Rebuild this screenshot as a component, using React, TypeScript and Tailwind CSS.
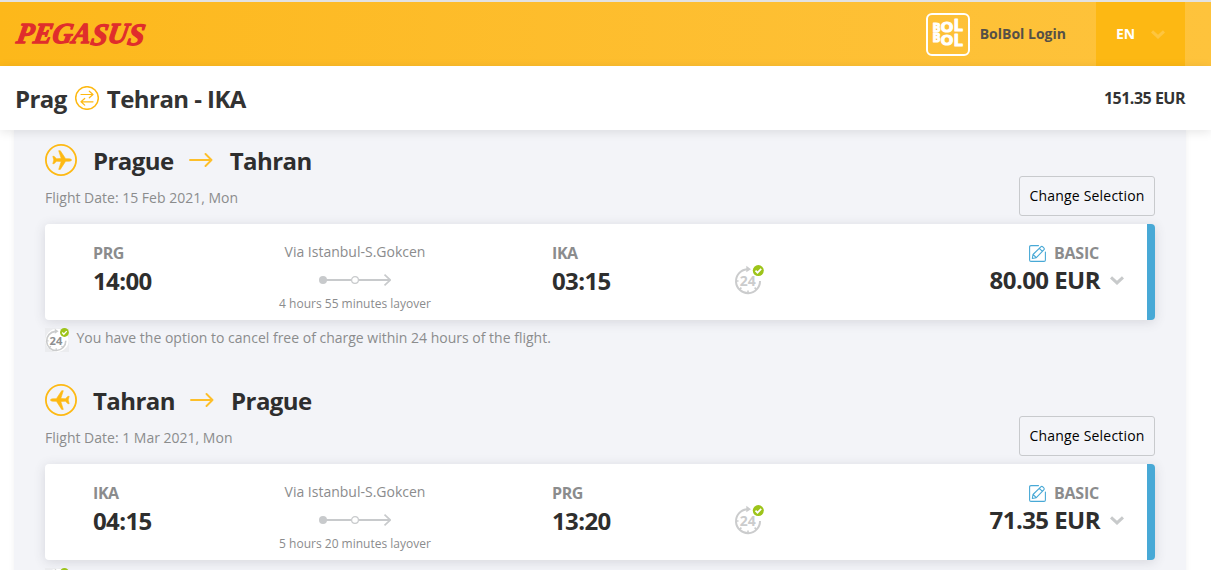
interface Flight {
  from: string;
  to: string;
  date: string;
  departureCode: string;
  departureTime: string;
  arrivalCode: string;
  arrivalTime: string;
  layover: string;
  price: string;
  inbound?: boolean;
}

const flights: Flight[] = [
  {
    from: "Prague",
    to: "Tahran",
    date: "15 Feb 2021, Mon",
    departureCode: "PRG",
    departureTime: "14:00",
    arrivalCode: "IKA",
    arrivalTime: "03:15",
    layover: "4 hours 55 minutes layover",
    price: "80.00 EUR"
  },
  {
    from: "Tahran",
    to: "Prague",
    date: "1 Mar 2021, Mon",
    departureCode: "IKA",
    departureTime: "04:15",
    arrivalCode: "PRG",
    arrivalTime: "13:20",
    layover: "5 hours 20 minutes layover",
    price: "71.35 EUR",
    inbound: true
  }
];

function PegasusLogo() {
  return (
    <svg width="132" height="28" viewBox="0 0 132 28" className="block overflow-visible">
      <text
        x="1"
        y="23"
        textLength="128"
        lengthAdjust="spacingAndGlyphs"
        transform="translate(4.5 0) skewX(-10)"
        className="fill-[#e02d2c] stroke-[#e02d2c] font-['Liberation_Serif',serif] text-[29px] font-bold italic"
        strokeWidth="1.300"
        strokeLinejoin="round"
      >
        PEGA
        <tspan dy="1.500" fontSize="31">S</tspan>
        <tspan dy="-1.500">U</tspan>
        <tspan dy="1.500" fontSize="31">S</tspan>
      </text>
    </svg>
  );
}

function BolBolLogo() {
  return (
    <svg width="44" height="43" viewBox="0 0 44 43" fill="none" className="block overflow-visible">
      <rect x="1" y="1" width="42" height="41" rx="5" stroke="#fff" strokeWidth="2" />
      <g className="fill-white stroke-white font-['Open_Sans',sans-serif] font-bold" strokeWidth="1" strokeLinejoin="round">
        <text x="6.500" y="18.500" fontSize="11.500" textLength="8" lengthAdjust="spacingAndGlyphs">B</text>
        <text x="14.500" y="18.500" fontSize="15" textLength="13" lengthAdjust="spacingAndGlyphs">O</text>
        <text x="27.500" y="18" fontSize="16" textLength="9.500" lengthAdjust="spacingAndGlyphs">L</text>
        <text x="6.500" y="29.300" fontSize="11.500" textLength="8" lengthAdjust="spacingAndGlyphs">B</text>
        <text x="14.500" y="32" fontSize="15" textLength="13" lengthAdjust="spacingAndGlyphs">O</text>
        <text x="27.500" y="33.300" fontSize="16" textLength="9.500" lengthAdjust="spacingAndGlyphs">L</text>
      </g>
    </svg>
  );
}

function SwapIcon() {
  return (
    <svg width="24" height="24" viewBox="0 0 24 24" fill="none" stroke="#fdb913" strokeLinecap="round" strokeLinejoin="round">
      <circle cx="12" cy="12" r="11.300" strokeWidth="1.500" />
      <path d="M6 8.500h12M14.300 5.200 18 8.500l-3.700 3.300M18 15.800H6M9.700 12.500 6 15.800l3.700 3.300" strokeWidth="1.200" />
    </svg>
  );
}

function PlaneIcon({ flipped }: { flipped?: boolean }) {
  return (
    <svg width="32" height="32" viewBox="0 0 32 32" fill="none" className={flipped ? "-scale-x-100" : ""}>
      <circle cx="16" cy="16" r="15.100" stroke="#fdb913" strokeWidth="1.800" />
      <path
        d="M7.800 12.300h1.300l2.400 2.500 4.700-.3-2.500-7.800h1.600l5.300 8 3.800.1c1.300.1 2.100.6 2.100 1.200s-.8 1.100-2.100 1.200l-3.800.1-5.300 8.100h-1.600l2.500-7.900-4.700-.3-2.400 2.500H7.800l1-3.700z"
        fill="#fdb913"
        stroke="#fdb913"
        strokeWidth=".6"
        strokeLinejoin="round"
      />
    </svg>
  );
}

function RouteArrow() {
  return (
    <svg width="24" height="14" viewBox="0 0 24 14" fill="none" stroke="#fdbf2a" strokeWidth="1.900" strokeLinecap="round" strokeLinejoin="round">
      <path d="M1 7h21.500M16.500 1l6 6-6 6" />
    </svg>
  );
}

function LayoverLine() {
  return (
    <svg width="72" height="12" viewBox="0 0 72 12" fill="none">
      <path d="M4 6h28M40 6h31" stroke="#c8cacc" strokeWidth="2" />
      <path d="m65.500.7 5.700 5.300-5.700 5.300" stroke="#c8cacc" strokeWidth="1.700" />
      <circle cx="4" cy="6" r="4" fill="#c8cacc" />
      <circle cx="36" cy="6" r="3.400" fill="#fff" stroke="#c8cacc" strokeWidth="1.200" />
    </svg>
  );
}

function Cancel24Icon({ size, dark }: { size: number; dark?: boolean }) {
  return (
    <svg width={size} height={size} viewBox="0 0 30 30" fill="none" className="block shrink-0">
      {dark && <circle cx="15" cy="15.500" r="14.500" fill="#fff" />}
      <path d="M13 4.200A12 12 0 1 0 26 16" stroke="#cbcccd" strokeWidth="2" />
      <path d="M12.300.8v6.500L17 4.200z" fill="#cbcccd" />
      <path d="M2 16h2.500M14 28v-2.600M5.600 24.400l1.800-1.800M22.400 24.400l-1.800-1.800" stroke="#cbcccd" strokeWidth="1.600" />
      <text
        x="5.800"
        y="20.800"
        fontSize="14"
        textLength="16"
        lengthAdjust="spacingAndGlyphs"
        className={dark ? "fill-[#8d8e8f] font-['Open_Sans',sans-serif] font-bold" : "fill-[#cbcccd] font-['Open_Sans',sans-serif] font-bold"}
      >
        24
      </text>
      <circle cx="24.300" cy="5.600" r="5.500" fill="#9dc41a" />
      <path d="m21.500 5.700 2 2 3.700-3.800" stroke="#fff" strokeWidth="1.700" />
    </svg>
  );
}

function EditIcon() {
  return (
    <svg width="17" height="17" viewBox="0 0 17 17" fill="none" stroke="#48a9d6" strokeWidth="1.100" strokeLinejoin="round" strokeLinecap="round">
      <path d="M9.500.6H2Q.6.600.6 2v13q0 1.400 1.400 1.400h13q1.400 0 1.400-1.400V7" />
      <path d="m3.300 13.500.7-4L11.800 1.900q1-1 2 0l1 1q1 1 0 2L7.300 12.700zM4 9.500l3.300 3.200M10.300 3.400l3.100 3" />
    </svg>
  );
}

function Chevron({ color }: { color: string }) {
  return (
    <svg width="14" height="9" viewBox="0 0 14 9" fill="none" stroke={color} strokeWidth="3.100">
      <path d="m1 1.300 6 5.500 6-5.500" />
    </svg>
  );
}

function FlightSection({ flight }: { flight: Flight }) {
  return (
    <section className="h-60 px-[31px]">
      <div className="flex h-[94px] justify-between">
        <div className="pt-3.5">
          <h2 className="flex h-8 items-center text-2xl font-bold tracking-[-0.55px] text-[#2e2e2e]">
            <PlaneIcon flipped={flight.inbound} />
            <span className="ml-4 mt-0.5">{flight.from}</span>
            <span className="mr-[17px] ml-[15px]">
              <RouteArrow />
            </span>
            <span className="mt-0.5">{flight.to}</span>
          </h2>
          <p className="mt-3 text-sm leading-5 text-[#8b8c8d]">Flight Date: {flight.date}</p>
        </div>
        <button className="mt-[46px] h-10 w-[136px] rounded-[3px] border border-[#c8cacd] text-sm font-medium tracking-[0.2px] text-black">
          Change Selection
        </button>
      </div>

      <div className="flex h-24 rounded-[4px] border-r-8 border-[#48a9d6] bg-white shadow-[0_2px_12px_rgba(60,65,80,0.16)]">
        <div className="w-[190px] pl-12 pt-[17px]">
          <div className="text-base leading-6 font-bold tracking-[-0.4px] text-[#8b8c8d]">{flight.departureCode}</div>
          <div className="text-2xl leading-8 font-bold tracking-[-0.6px] text-[#2e2e2e]">{flight.departureTime}</div>
        </div>
        <div className="flex w-60 flex-col items-center pt-[18px] text-[#8b8c8d]">
          <div className="text-sm leading-5">Via Istanbul-S.Gokcen</div>
          <div className="mt-3">
            <LayoverLine />
          </div>
          <div className="mt-2 text-xs leading-5">{flight.layover}</div>
        </div>
        <div className="w-[259px] pl-[77px] pt-[17px]">
          <div className="text-base leading-6 font-bold tracking-[-0.4px] text-[#8b8c8d]">{flight.arrivalCode}</div>
          <div className="text-2xl leading-8 font-bold tracking-[-0.6px] text-[#2e2e2e]">{flight.arrivalTime}</div>
        </div>
        <div className="pt-[41px]">
          <Cancel24Icon size={30} />
        </div>
        <div className="ml-auto pt-[17px] pr-[23px]">
          <div className="flex h-6 items-center justify-end gap-2 pr-[25px] text-base font-bold tracking-[-0.2px] text-[#8b8c8d]">
            <EditIcon />
            BASIC
          </div>
          <div className="-mt-px flex h-8 items-center justify-end gap-2.5 text-2xl font-bold tracking-[-0.55px] text-[#2e2e2e]">
            <span>{flight.price}</span>
            <Chevron color="#c8cacb" />
          </div>
        </div>
      </div>

      <div className="flex h-9 items-center gap-[7.5px]">
        <span className="mt-1 flex size-6 items-center justify-center bg-[#ebecef]">
          <Cancel24Icon size={24} dark />
        </span>
        <p className="text-sm leading-5 text-[#8b8c8d]">
          You have the option to cancel free of charge within 24 hours of the flight.
        </p>
      </div>
    </section>
  );
}

export default function App() {
  return (
    <div className="h-[570px] w-[1211px] overflow-hidden bg-white font-['Open_Sans',sans-serif]">
      <header className="flex h-[66px] items-stretch border-t-2 border-[#e2e2e2] bg-gradient-to-r from-[#fdb81a] to-[#fec33c]">
        <div className="pt-[18px] pl-3.5">
          <PegasusLogo />
        </div>
        <div className="ml-auto flex items-center gap-2.5 pr-[30px]">
          <BolBolLogo />
          <span className="text-sm font-bold text-[#555047]">BolBol Login</span>
        </div>
        <div className="mr-[26px] flex w-[89px] items-center gap-4 bg-[#fdb813] pl-5 text-sm font-bold text-white">
          EN
          <Chevron color="#fec53f" />
        </div>
      </header>

      <div className="relative flex h-16 items-center justify-between bg-white pr-[26px] pl-[15px] shadow-[0_2px_10px_rgba(0,0,0,0.1)]">
        <h1 className="flex items-center gap-2 text-2xl font-bold tracking-[-0.55px] text-[#333]">
          <span className="mt-0.5">Prag</span>
          <SwapIcon />
          <span className="mt-0.5">Tehran - IKA</span>
        </h1>
        <span className="text-base font-bold tracking-[-0.5px] text-[#333]">151.35 EUR</span>
      </div>

      <main className="mr-[25px] ml-3.5 h-[480px] bg-[#f3f4f8] shadow-[0_0_6px_rgba(0,0,0,0.06)]">
        {flights.map((flight) => (
          <FlightSection key={flight.from} flight={flight} />
        ))}
      </main>
    </div>
  );
}
